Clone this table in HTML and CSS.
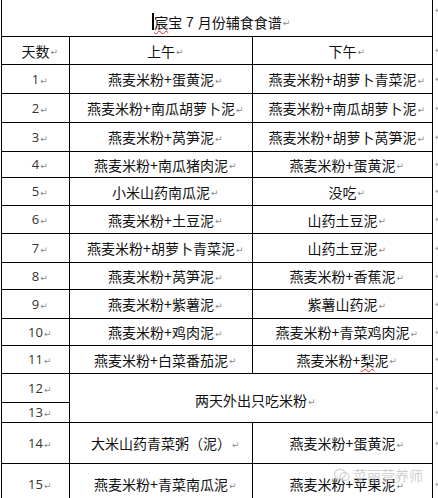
FILE: index.html
```html
<!DOCTYPE html>
<html>
<head>
<meta charset="utf-8">
<link rel="stylesheet" href="styles.css">
</head>
<body>
<div class="page">
  <div class="table">
    <div class="cell title"><span class="cursor"></span><span class="typo">宸</span>宝<span class="latin"> 7 </span>月份辅食食谱<span class="pm">↵</span></div>
    <div class="cell">天数<span class="pm">↵</span></div>
    <div class="cell">上午<span class="pm">↵</span></div>
    <div class="cell">下午<span class="pm">↵</span></div>

    <div class="cell num">1<span class="pm">↵</span></div>
    <div class="cell">燕麦米粉+蛋黄泥<span class="pm">↵</span></div>
    <div class="cell">燕麦米粉+胡萝卜青菜泥<span class="pm">↵</span></div>

    <div class="cell num">2<span class="pm">↵</span></div>
    <div class="cell">燕麦米粉+南瓜胡萝卜泥<span class="pm">↵</span></div>
    <div class="cell">燕麦米粉+南瓜胡萝卜泥<span class="pm">↵</span></div>

    <div class="cell num">3<span class="pm">↵</span></div>
    <div class="cell">燕麦米粉+莴笋泥<span class="pm">↵</span></div>
    <div class="cell">燕麦米粉+胡萝卜莴笋泥<span class="pm">↵</span></div>

    <div class="cell num">4<span class="pm">↵</span></div>
    <div class="cell">燕麦米粉+南瓜猪肉泥<span class="pm">↵</span></div>
    <div class="cell">燕麦米粉+蛋黄泥<span class="pm">↵</span></div>

    <div class="cell num">5<span class="pm">↵</span></div>
    <div class="cell">小米山药南瓜泥<span class="pm">↵</span></div>
    <div class="cell">没吃<span class="pm">↵</span></div>

    <div class="cell num">6<span class="pm">↵</span></div>
    <div class="cell">燕麦米粉+土豆泥<span class="pm">↵</span></div>
    <div class="cell">山药土豆泥<span class="pm">↵</span></div>

    <div class="cell num">7<span class="pm">↵</span></div>
    <div class="cell">燕麦米粉+胡萝卜青菜泥<span class="pm">↵</span></div>
    <div class="cell">山药土豆泥<span class="pm">↵</span></div>

    <div class="cell num">8<span class="pm">↵</span></div>
    <div class="cell">燕麦米粉+莴笋泥<span class="pm">↵</span></div>
    <div class="cell">燕麦米粉+香蕉泥<span class="pm">↵</span></div>

    <div class="cell num">9<span class="pm">↵</span></div>
    <div class="cell">燕麦米粉+紫薯泥<span class="pm">↵</span></div>
    <div class="cell">紫薯山药泥<span class="pm">↵</span></div>

    <div class="cell num">10<span class="pm">↵</span></div>
    <div class="cell">燕麦米粉+鸡肉泥<span class="pm">↵</span></div>
    <div class="cell">燕麦米粉+青菜鸡肉泥<span class="pm">↵</span></div>

    <div class="cell num">11<span class="pm">↵</span></div>
    <div class="cell">燕麦米粉+白菜番茄泥<span class="pm">↵</span></div>
    <div class="cell">燕麦米粉+<span class="typo">梨</span>泥<span class="pm">↵</span></div>

    <div class="cell num">12<span class="pm">↵</span></div>
    <div class="cell merged">两天外出只吃米粉<span class="pm">↵</span></div>
    <div class="cell num">13<span class="pm">↵</span></div>

    <div class="cell num">14<span class="pm">↵</span></div>
    <div class="cell">大米山药青菜粥（泥）<span class="pm">↵</span></div>
    <div class="cell">燕麦米粉+蛋黄泥<span class="pm">↵</span></div>

    <div class="cell num">15<span class="pm">↵</span></div>
    <div class="cell">燕麦米粉+青菜南瓜泥<span class="pm">↵</span></div>
    <div class="cell">燕麦米粉+苹果泥<span class="pm">↵</span></div>
  </div>
  <div class="ends">
    <span class="end top">↵</span>
    <span class="end">↵</span><span class="end">↵</span><span class="end">↵</span><span class="end">↵</span>
    <span class="end">↵</span><span class="end">↵</span><span class="end">↵</span><span class="end">↵</span>
    <span class="end">↵</span><span class="end">↵</span><span class="end">↵</span><span class="end">↵</span>
    <span class="end">↵</span><span class="end">↵</span><span class="end">↵</span><span class="end">↵</span>
  </div>
  <div class="watermark">
    <svg class="wm-logo" width="16" height="14" viewBox="0 0 16 14">
      <ellipse cx="6" cy="6" rx="5.5" ry="4.6" fill="none" stroke="#d4d4d4" stroke-width="1.2"/>
      <ellipse cx="10.5" cy="8.5" rx="4.6" ry="3.8" fill="none" stroke="#d4d4d4" stroke-width="1.2"/>
    </svg>
    <span>菜丽营养师</span>
  </div>
</div>
</body>
</html>
```

FILE: styles.css
```css
html, body {
  margin: 0;
  padding: 0;
  background: #fff;
}
body {
  width: 438px;
  height: 498px;
  overflow: hidden;
  font-family: "Noto Sans CJK SC", "Noto Sans", sans-serif;
  font-size: 14px;
  color: #111;
}
.page {
  position: relative;
  display: flex;
  align-items: flex-start;
  gap: 1px;
  padding-left: 1px;
}
.table {
  display: grid;
  grid-template-columns: 67px 182px 179px;
  grid-template-rows: 36px 27px 28px 28px 28px 25px 27px 27px 28px 26px 28px 26px 27px 28px 19px 40px 40px;
  gap: 1px;
  padding: 0 1px 1px 1px;
  background: #000;
}
.cell {
  background: #fff;
  display: flex;
  align-items: center;
  justify-content: center;
  line-height: 1;
  white-space: pre;
}
.title {
  grid-column: 1 / span 3;
  padding-top: 7px;
  box-sizing: border-box;
}
.latin {
  font-family: "Liberation Sans", sans-serif;
  font-size: 14px;
}
.merged {
  grid-column: 2 / span 2;
  grid-row: span 2;
  padding-top: 4px;
  box-sizing: border-box;
}
.num {
  color: #333;
  font-family: "Open Sans", "Noto Sans", sans-serif;
  font-size: 13px;
}
.pm {
  display: inline-block;
  width: 0;
  overflow: visible;
  font-family: "DejaVu Sans", sans-serif;
  font-size: 9px;
  color: #8a8a8a;
  position: relative;
  top: 2px;
  text-indent: 1px;
}
.cursor {
  display: inline-block;
  width: 2px;
  height: 17px;
  background: #000;
}
.typo {
  text-decoration: underline wavy #e23;
  text-decoration-thickness: 1px;
  text-underline-offset: 2px;
}
.ends {
  display: grid;
  grid-template-rows: 36px 27px 28px 28px 28px 25px 27px 27px 28px 26px 28px 26px 27px 28px 19px 40px 40px;
  row-gap: 1px;
  width: 6px;
  overflow: hidden;
}
.end {
  font-family: "DejaVu Sans", sans-serif;
  font-size: 9px;
  color: #999;
  display: flex;
  align-items: center;
  padding-left: 1px;
  line-height: 1;
}
.end.top {
  align-items: flex-start;
  padding-top: 6px;
}
.watermark {
  position: absolute;
  left: 334px;
  top: 465px;
  display: flex;
  align-items: center;
  gap: 3px;
  font-size: 14px;
  color: rgba(190, 190, 190, 0.75);
}
```
